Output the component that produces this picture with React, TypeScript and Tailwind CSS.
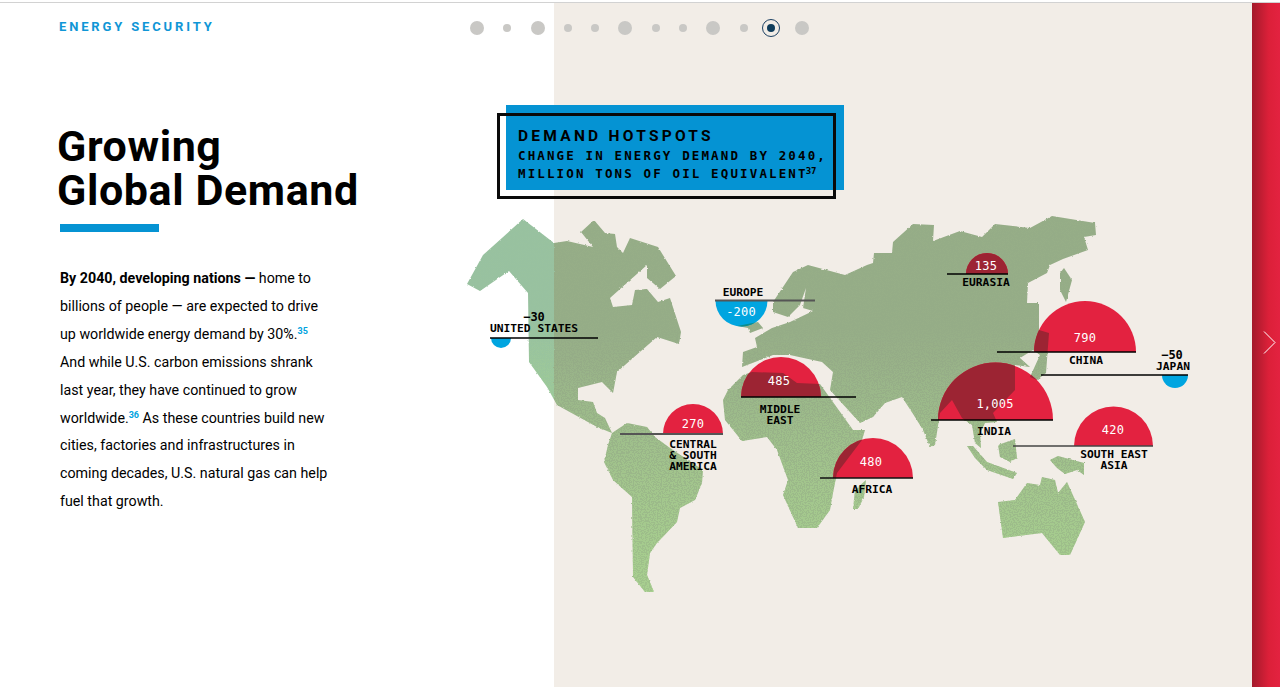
const LAND = [
  // north america
  "M467,284 L483,255 L523,219 L554,243 L567,241 L593,247 L581,232 L594,220 L605,233 L615,234 L617,247 L623,253 L630,238 L658,247 L676,276 L660,289 L647,278 L647,265 L610,298 L613,307 L632,305 L635,290 L647,289 L658,302 L670,298 L681,332 L679,344 L657,337 L617,372 L613,393 L602,382 L578,388 L578,400 L593,402 L597,413 L605,418 L612,433 L597,427 L557,405 L547,387 L529,362 L528,293 L509,271 L480,291 Z",
  // south america
  "M612,433 L627,423 L647,427 L655,437 L670,448 L703,470 L702,483 L695,500 L680,508 L677,522 L657,543 L650,553 L647,575 L654,592 L645,592 L633,577 L632,497 L613,480 L604,462 L608,445 Z",
  // africa
  "M723,400 L728,390 L743,375 L752,372 L783,373 L797,383 L820,384 L853,430 L865,430 L862,440 L837,473 L833,493 L830,510 L817,528 L798,528 L783,495 L788,480 L777,450 L767,437 L742,441 L725,420 Z",
  // madagascar
  "M853,509 L855,490 L866,480 L864,497 L858,509 Z",
  // eurasia
  "M773,302 L793,272 L808,265 L845,275 L867,265 L873,263 L874,253 L892,253 L893,242 L913,224 L934,225 L933,241 L960,231 L982,237 L995,224 L1030,228 L1052,216 L1095,223 L1096,235 L1084,237 L1088,250 L1063,259 L1050,265 L1047,273 L1028,283 L1027,303 L1039,303 L1039,330 L1049,333 L1046,373 L1037,380 L1030,377 L1040,355 L1033,350 L1020,358 L1030,367 L1015,365 L1015,390 L993,413 L997,422 L985,423 L980,433 L981,448 L975,443 L972,425 L962,418 L952,400 L940,413 L935,445 L930,447 L923,430 L915,417 L902,397 L885,403 L873,417 L860,423 L830,390 L833,372 L822,362 L790,355 L773,355 L742,367 L743,352 L757,347 L755,338 L772,328 L790,322 L813,311 L803,308 L806,288 L800,305 L788,317 L773,312 Z",
  // uk
  "M737,326 L758,322 L763,328 L750,333 L748,328 Z",
  // japan
  "M1060,273 L1064,268 L1072,280 L1066,302 L1060,290 Z",
  // sumatra, borneo, new guinea
  "M967,446 L973,446 L987,462 L1017,473 L1013,479 L987,470 L975,458 Z",
  "M998,445 L1015,439 L1017,458 L1010,462 L1000,457 Z",
  "M1050,460 L1058,456 L1084,463 L1084,475 L1077,470 L1065,474 L1057,468 Z",
  // australia
  "M998,502 L1015,500 L1027,483 L1040,485 L1042,477 L1055,480 L1058,493 L1067,482 L1085,522 L1070,555 L1060,555 L1042,533 L1003,538 Z",
];

// cx, base y, radius
const RED = [
  [781, 397, 40],
  [693, 434, 30],
  [873, 478, 40],
  [987, 274, 21],
  [1085, 352, 51],
  [995.5, 420, 57.5],
  [1113.5, 446, 39.5],
];

const BLUE = [
  [501, 338, 10],
  [741.5, 300.5, 26],
  [1175, 375, 13],
];

const LINES = [
  [490, 598, 338, "#000", 1.5],
  [715, 815, 300.5, "#555", 2],
  [741, 856, 397, "#000", 1.5],
  [620, 723, 434, "#555", 2],
  [820, 913, 478, "#111", 1.5],
  [947, 1008, 274, "#000", 1.5],
  [997, 1136, 352, "#000", 1.5],
  [1041, 1188, 375, "#000", 1.5],
  [931, 1053, 420, "#000", 1.5],
  [1013, 1153, 446, "#444", 1.5],
] as const;

const redPath = (r: number[]) => `M${r[0] - r[2]},${r[1]} A${r[2]},${r[2]} 0 0 1 ${r[0] + r[2]},${r[1]} Z`;
const bluePath = (r: number[]) => `M${r[0] - r[2]},${r[1]} A${r[2]},${r[2]} 0 0 0 ${r[0] + r[2]},${r[1]} Z`;

const Land = () => (
  <>
    {LAND.map((d) => (
      <path key={d} d={d} />
    ))}
  </>
);

const WorldMap = () => (
  <svg className="absolute inset-0" width="1280" height="687" viewBox="0 0 1280 687">
    <defs>
      <linearGradient id="landRight" gradientUnits="userSpaceOnUse" x1="0" y1="360" x2="0" y2="590">
        <stop offset="0" stopColor="#95ac87" />
        <stop offset="1" stopColor="#a0c38b" />
      </linearGradient>
      <linearGradient id="landLeft" gradientUnits="userSpaceOnUse" x1="0" y1="320" x2="0" y2="440">
        <stop offset="0" stopColor="#98c1a0" />
        <stop offset="1" stopColor="#9ccb97" />
      </linearGradient>
      <linearGradient id="grainFill" gradientUnits="userSpaceOnUse" x1="0" y1="330" x2="0" y2="580">
        <stop offset="0" stopColor="#a9d190" stopOpacity="0.05" />
        <stop offset="1" stopColor="#a9d190" stopOpacity="0.8" />
      </linearGradient>
      <clipPath id="clipLeft">
        <rect x="0" y="0" width="554" height="687" />
      </clipPath>
      <clipPath id="clipRight">
        <rect x="554" y="0" width="726" height="687" />
      </clipPath>
      <clipPath id="clipRed">
        {RED.map((r) => (
          <path key={r[1]} d={redPath(r)} />
        ))}
      </clipPath>
      <clipPath id="clipBlue">
        {BLUE.map((r) => (
          <path key={r[1]} d={bluePath(r)} />
        ))}
      </clipPath>
      <filter id="rough" filterUnits="userSpaceOnUse" x="440" y="200" width="680" height="410">
        <feTurbulence type="fractalNoise" baseFrequency="0.45" numOctaves="1" seed="3" />
        <feDisplacementMap in="SourceGraphic" scale="2.5" xChannelSelector="R" yChannelSelector="G" />
      </filter>
      <filter id="grain" filterUnits="userSpaceOnUse" x="440" y="200" width="680" height="410">
        <feTurbulence type="fractalNoise" baseFrequency="0.75" numOctaves="1" seed="8" />
        <feColorMatrix values="0 0 0 0 0 0 0 0 0 0 0 0 0 0 0 1.6 0 0 0 -0.3" />
        <feComponentTransfer result="dots">
          <feFuncA type="discrete" tableValues="0 0 1 1" />
        </feComponentTransfer>
        <feComposite in="SourceGraphic" in2="dots" operator="in" />
      </filter>
    </defs>

    <g filter="url(#rough)">
      <g clipPath="url(#clipLeft)" fill="url(#landLeft)">
        <Land />
      </g>
      <g clipPath="url(#clipRight)" fill="url(#landRight)">
        <Land />
      </g>
    </g>
    <g filter="url(#grain)" fill="url(#grainFill)">
      <Land />
    </g>

    {RED.map((r) => (
      <path key={r[1]} d={redPath(r)} fill="#e32240" />
    ))}
    {BLUE.map((r) => (
      <path key={r[1]} d={bluePath(r)} fill="#00a5e0" />
    ))}
    <g clipPath="url(#clipRed)" fill="#9c2433">
      <Land />
    </g>
    <g clipPath="url(#clipBlue)" fill="#0c8d8c">
      <Land />
    </g>

    {LINES.map(([x1, x2, y, color, w]) => (
      <line key={y} x1={x1} x2={x2} y1={y} y2={y} stroke={color} strokeWidth={w} />
    ))}
  </svg>
);

const labelClass =
  "absolute -translate-x-1/2 -translate-y-1/2 whitespace-nowrap text-center font-['DejaVu_Sans_Mono',monospace] text-[11.25px] font-bold leading-[11px] text-black";
const valueClass =
  "absolute -translate-x-1/2 -translate-y-1/2 whitespace-nowrap font-['DejaVu_Sans_Mono',monospace] text-[12px] leading-[12px] tracking-[0.2px] text-white";

const Dot = ({ big }: { big?: boolean }) => (
  <span className={big ? "h-[14px] w-[14px] rounded-full bg-[#c9c8c5]" : "h-2 w-2 rounded-full bg-[#c9c8c5]"} />
);

export default function App() {
  return (
    <div className="relative flex h-[687px] w-[1280px] flex-col overflow-hidden bg-white pt-[2px]">
      <div className="flex flex-1 border-t border-[#d2d2d2]">
        {/* LEFT TEXT */}
        <div className="w-[554px] pl-[59px] pt-[16px]">
          <p className="font-['Roboto',sans-serif] text-[13px] font-bold leading-[16px] tracking-[2.85px] text-[#0f96d6]">
            ENERGY SECURITY
          </p>
          <h1 className="mt-[89px] -ml-[2px] font-['Roboto',sans-serif] text-[43px] font-bold leading-[44px] tracking-[0.6px] text-black">
            Growing
            <br />
            Global Demand
          </h1>
          <div className="ml-px mt-[12px] h-2 w-[99px] bg-[#0593d3]" />
          <p className="ml-px mt-[33px] font-['Roboto',sans-serif] text-[14.25px] leading-[27.9px] text-black">
            <b>By 2040, developing nations —</b> home to
            <br />
            billions of people — are expected to drive
            <br />
            up worldwide energy demand by 30%.
            <sup className="text-[9px] font-bold text-[#00a3e0]">35</sup>
            <br />
            And while U.S. carbon emissions shrank
            <br />
            last year, they have continued to grow
            <br />
            worldwide.<sup className="text-[9px] font-bold text-[#00a3e0]">36</sup> As these countries build new
            <br />
            cities, factories and infrastructures in
            <br />
            coming decades, U.S. natural gas can help
            <br />
            fuel that growth.
          </p>
        </div>

        <div className="flex-1 bg-[#f2ede7]" />

        {/* NEXT BAR */}
        <div className="flex w-[28px] items-center justify-end bg-gradient-to-r from-[#a31a2b] via-[#dc2039] via-60% to-[#e32240] pr-[4px]">
          <svg width="13" height="23" viewBox="0 0 13 23" fill="none" stroke="#fff" strokeWidth="1" className="-mt-[5px]">
            <path d="M1,0.5 L12,11.5 L1,22.5" />
          </svg>
        </div>
      </div>

      {/* MAP */}
      <WorldMap />

      {/* PAGER */}
      <div className="absolute left-[470px] top-[19px] flex items-center gap-[19.3px]">
        <Dot big />
        <Dot />
        <Dot big />
        <Dot />
        <Dot />
        <Dot big />
        <Dot />
        <Dot />
        <Dot big />
        <Dot />
        <span className="-ml-[5px] -mr-[4px] flex h-[18px] w-[18px] items-center justify-center rounded-full border-[1.5px] border-[#1d4163]">
          <span className="h-2 w-2 rounded-full bg-[#0f3d5c]" />
        </span>
        <Dot big />
      </div>

      {/* TITLE BOX */}
      <div className="absolute left-[506px] top-[105px] h-[85px] w-[338px] bg-[#0593d3]" />
      <div className="absolute left-[497px] top-[113px] h-[86px] w-[339px] border-[3px] border-[#0a0a0a] pl-[18px] pt-[10px]">
        <p className="font-['Roboto',sans-serif] text-[15.5px] font-bold leading-[21px] tracking-[3.25px] text-black">
          DEMAND HOTSPOTS
        </p>
        <p className="whitespace-nowrap font-['DejaVu_Sans_Mono',monospace] text-[12.5px] font-bold leading-[18px] tracking-[2.13px] text-black">
          CHANGE IN ENERGY DEMAND BY 2040,
          <br />
          MILLION TONS OF OIL EQUIVALENT
          <sup className="-ml-[2px] text-[9px] tracking-normal">37</sup>
        </p>
      </div>

      {/* MAP LABELS */}
      <p className={`${labelClass} left-[534px] top-[317px] text-[12px]`}>−30</p>
      <p className={`${labelClass} left-[534px] top-[328px]`}>UNITED STATES</p>
      <p className={`${labelClass} left-[743px] top-[292px]`}>EUROPE</p>
      <p className={`${valueClass} left-[741px] top-[312px]`}>-200</p>
      <p className={`${valueClass} left-[779px] top-[381px]`}>485</p>
      <p className={`${labelClass} left-[780px] top-[415px]`}>
        MIDDLE
        <br />
        EAST
      </p>
      <p className={`${valueClass} left-[693px] top-[424px]`}>270</p>
      <p className={`${labelClass} left-[693px] top-[455px]`}>
        CENTRAL
        <br />
        &amp; SOUTH
        <br />
        AMERICA
      </p>
      <p className={`${valueClass} left-[871px] top-[462px]`}>480</p>
      <p className={`${labelClass} left-[872px] top-[489px]`}>AFRICA</p>
      <p className={`${valueClass} left-[986px] top-[266px]`}>135</p>
      <p className={`${labelClass} left-[986px] top-[282px]`}>EURASIA</p>
      <p className={`${valueClass} left-[1085px] top-[338px]`}>790</p>
      <p className={`${labelClass} left-[1086px] top-[360px]`}>CHINA</p>
      <p className={`${labelClass} left-[1172px] top-[355px] text-[12px]`}>−50</p>
      <p className={`${labelClass} left-[1173px] top-[366px]`}>JAPAN</p>
      <p className={`${valueClass} left-[995px] top-[404px]`}>1,005</p>
      <p className={`${labelClass} left-[994px] top-[431px]`}>INDIA</p>
      <p className={`${valueClass} left-[1113px] top-[430px]`}>420</p>
      <p className={`${labelClass} left-[1114px] top-[460px]`}>
        SOUTH EAST
        <br />
        ASIA
      </p>
    </div>
  );
}
